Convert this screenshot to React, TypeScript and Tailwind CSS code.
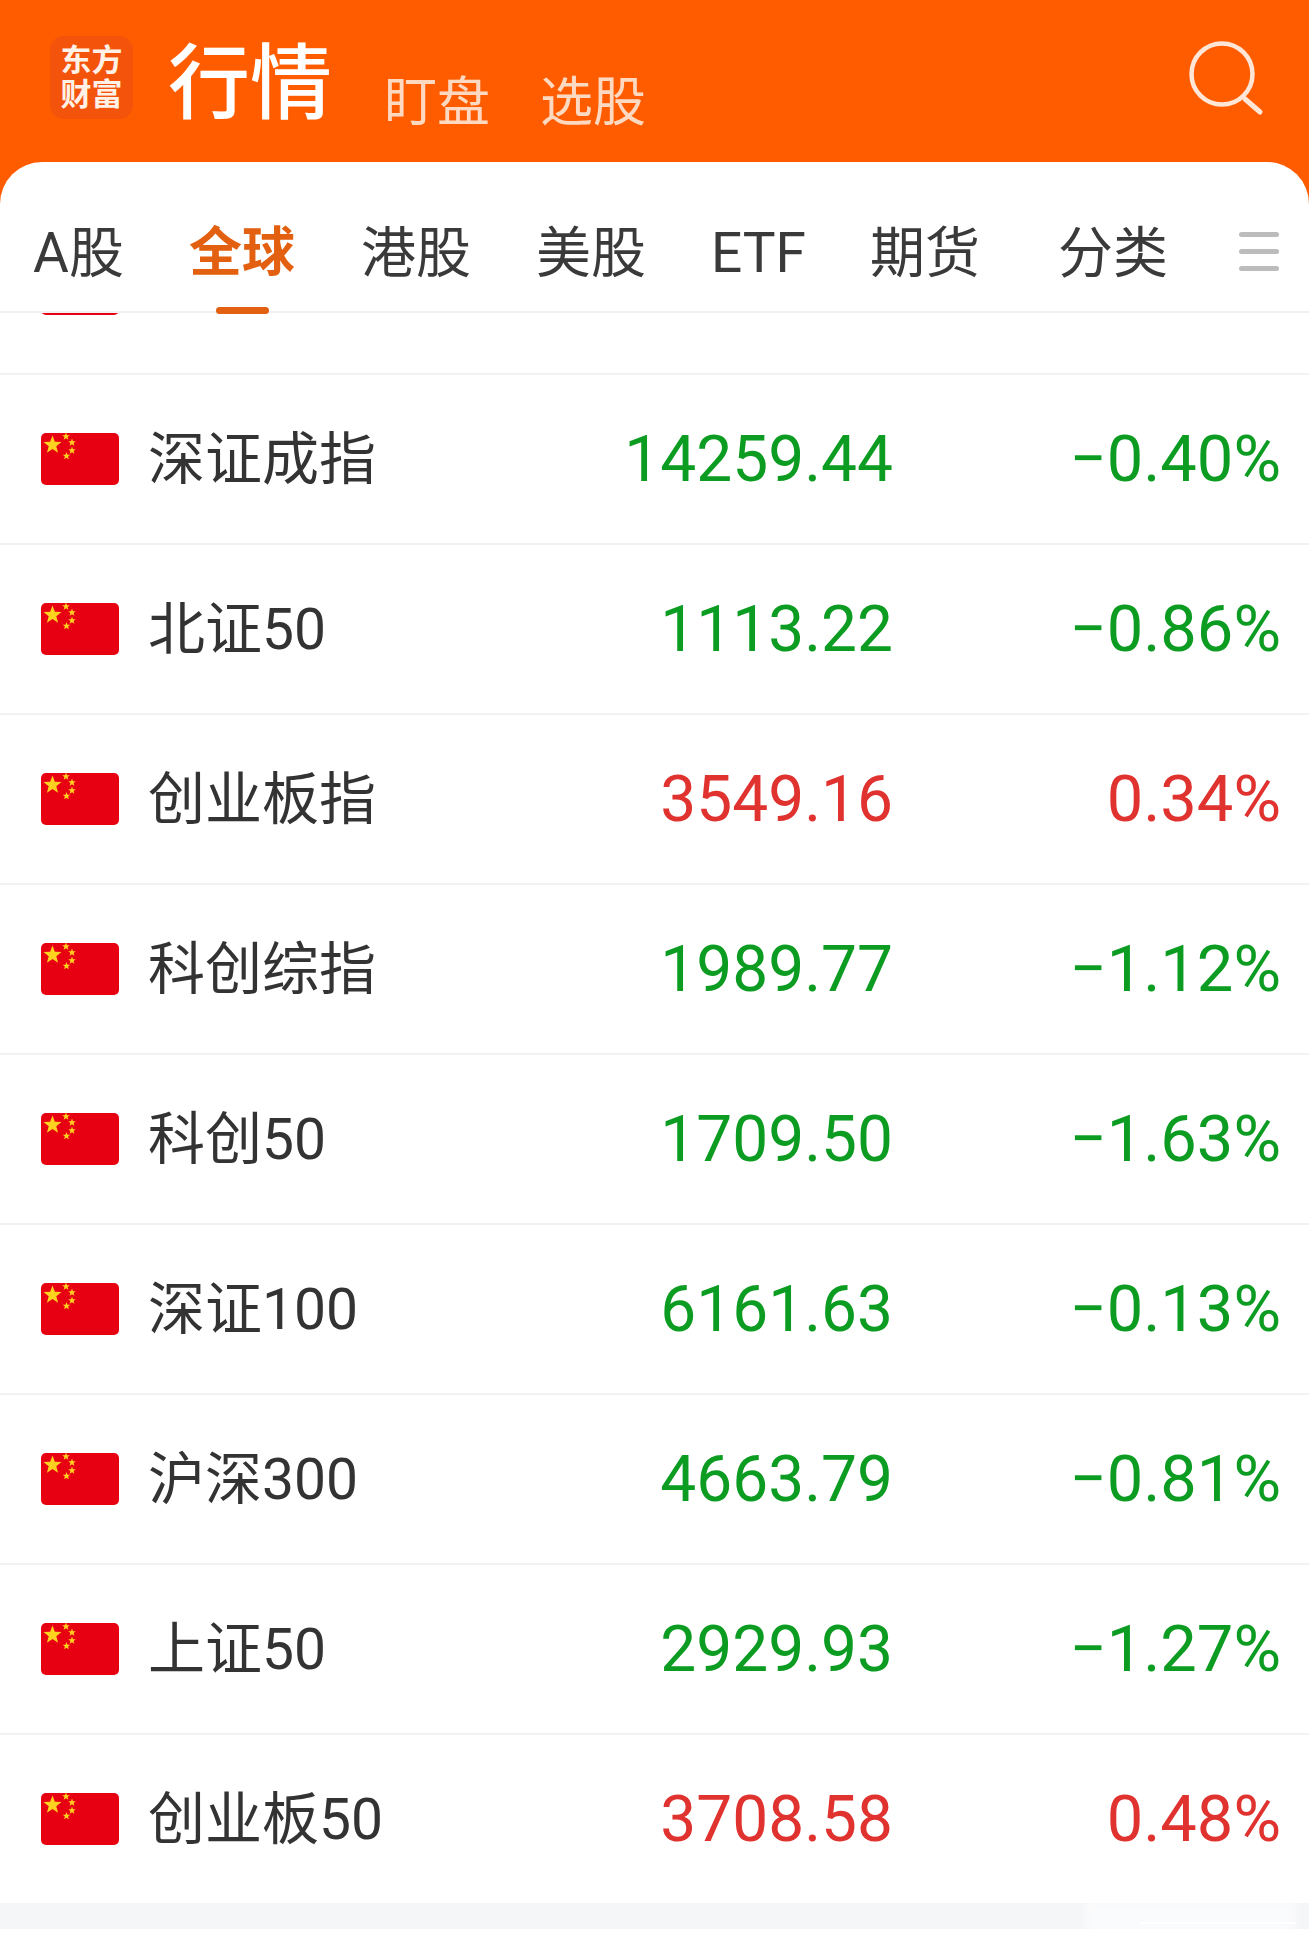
const FONT = "font-['Roboto','Noto_Sans_CJK_SC',sans-serif]";

const tabs = [
  { label: "A股", className: "ml-[33px] w-[87px]" },
  { label: "全球", className: "ml-[69px] w-[106px]", active: true },
  { label: "港股", className: "ml-[66px] w-[105px]" },
  { label: "美股", className: "ml-[70px] w-[106px]" },
  { label: "ETF", className: "ml-[69px] w-[89px]" },
  { label: "期货", className: "ml-[70px] w-[104px]" },
  { label: "分类", className: "ml-[84px] w-[103px]" },
];

const rows = [
  { name: "深证成指", price: "14259.44", pct: "-0.40%" },
  { name: "北证50", price: "1113.22", pct: "-0.86%" },
  { name: "创业板指", price: "3549.16", pct: "0.34%" },
  { name: "科创综指", price: "1989.77", pct: "-1.12%" },
  { name: "科创50", price: "1709.50", pct: "-1.63%" },
  { name: "深证100", price: "6161.63", pct: "-0.13%" },
  { name: "沪深300", price: "4663.79", pct: "-0.81%" },
  { name: "上证50", price: "2929.93", pct: "-1.27%" },
  { name: "创业板50", price: "3708.58", pct: "0.48%" },
];

function Star({ cx, cy, r }: { cx: number; cy: number; r: number }) {
  const points = Array.from({ length: 10 }, (_, i) => {
    const radius = i % 2 === 0 ? r : r * 0.42;
    const angle = (Math.PI / 5) * i - Math.PI / 2;
    return `${cx + radius * Math.cos(angle)},${cy + radius * Math.sin(angle)}`;
  }).join(" ");
  return <polygon points={points} fill="#ffd21f" />;
}

function Flag() {
  return (
    <svg width="78" height="52" viewBox="0 0 78 52" className="shrink-0">
      <rect width="78" height="52" rx="5" fill="#e60012" />
      <Star cx={11.5} cy={12} r={9.5} />
      <Star cx={25} cy={3.5} r={4} />
      <Star cx={31} cy={9.5} r={4} />
      <Star cx={31} cy={17.5} r={4} />
      <Star cx={25.5} cy={23} r={4} />
    </svg>
  );
}

function Row({ name, price, pct, clipped }: { name: string; price?: string; pct?: string; clipped?: boolean }) {
  const color = pct?.startsWith("-") ? "text-[#0b9c21]" : "text-[#e0322f]";
  return (
    <div className="flex h-[170px] shrink-0 items-center border-b-2 border-[#f2f2f2] pl-[41px] pr-[28px]">
      <Flag />
      <div className={`ml-[29px] flex-1 text-[57px] leading-none text-[#333333] ${clipped ? "-translate-y-[2px]" : ""}`}>
        {name}
      </div>
      <div className={`w-[339px] pt-[2px] text-right text-[64px] leading-none ${color}`}>{price}</div>
      <div className={`w-[388px] pt-[1px] text-right text-[65px] leading-none ${color}`}>{pct?.replace("-", "−")}</div>
    </div>
  );
}

export default function App() {
  return (
    <div className={`relative h-[1954px] w-[1309px] overflow-hidden bg-[#ff5c00] ${FONT}`}>
      <header className="flex h-[162px] items-start">
        <div className="ml-[50px] mt-[36px] flex h-[83px] w-[83px] flex-col items-center justify-center rounded-[14px] bg-[#f4530c] text-[31px] font-bold leading-[34px] text-[#fff1e6]">
          <span>东方</span>
          <span>财富</span>
        </div>
        <h1 className="ml-[35px] mt-[43px] text-[82px] font-medium leading-none text-white">行情</h1>
        <span className="ml-[52px] mt-[77px] text-[53px] leading-none text-[#fdd9c2]">盯盘</span>
        <span className="ml-[50px] mt-[77px] text-[53px] leading-none text-[#fdd9c2]">选股</span>
        <svg width="76" height="76" viewBox="0 0 76 76" fill="none" className="ml-[543px] mt-[40px]">
          <circle cx="33" cy="34" r="30.5" stroke="#ffe6d6" strokeWidth="4.5" />
          <path d="M56 59 L71 72" stroke="#ffe6d6" strokeWidth="5" strokeLinecap="round" />
        </svg>
      </header>

      <main className="flex h-[1792px] flex-col rounded-t-[42px] bg-white">
        <nav className="flex h-[151px] shrink-0 items-center border-b-2 border-[#f0f0f0] pt-[33px]">
          {tabs.map((tab) => (
            <div
              key={tab.label}
              className={`relative shrink-0 whitespace-nowrap text-center leading-none ${tab.className} ${
                tab.active ? "text-[53px] font-bold text-[#e2600f]" : "text-[55px] text-[#3a3a3a]"
              }`}
            >
              {tab.label}
              {tab.active && (
                <div className="absolute left-[27px] top-[80px] h-[7px] w-[53px] rounded-full bg-[#e2600f]" />
              )}
            </div>
          ))}
          <div className="ml-[78px] flex w-[40px] shrink-0 -translate-y-[2px] flex-col gap-[12px]">
            <div className="h-[5px] rounded-full bg-[#bcbcbc]" />
            <div className="h-[5px] rounded-full bg-[#bcbcbc]" />
            <div className="h-[5px] rounded-full bg-[#bcbcbc]" />
          </div>
        </nav>

        <div className="flex h-[1590px] shrink-0 flex-col overflow-hidden">
          <div className="-mt-[108px]">
            <Row name="上证指数" clipped />
          </div>
          {rows.map((row) => (
            <Row key={row.name} {...row} />
          ))}
        </div>
        <div className="h-[26px] shrink-0 bg-[#f5f6f8]" />
      </main>

      {/* watermark smudge bottom right */}
      <div className="absolute left-[1085px] top-[1900px] h-[42px] w-[210px] bg-white/50 blur-[3px]" />
      <div className="absolute left-[1140px] top-[1922px] h-[2px] w-[156px] bg-white" />
    </div>
  );
}
